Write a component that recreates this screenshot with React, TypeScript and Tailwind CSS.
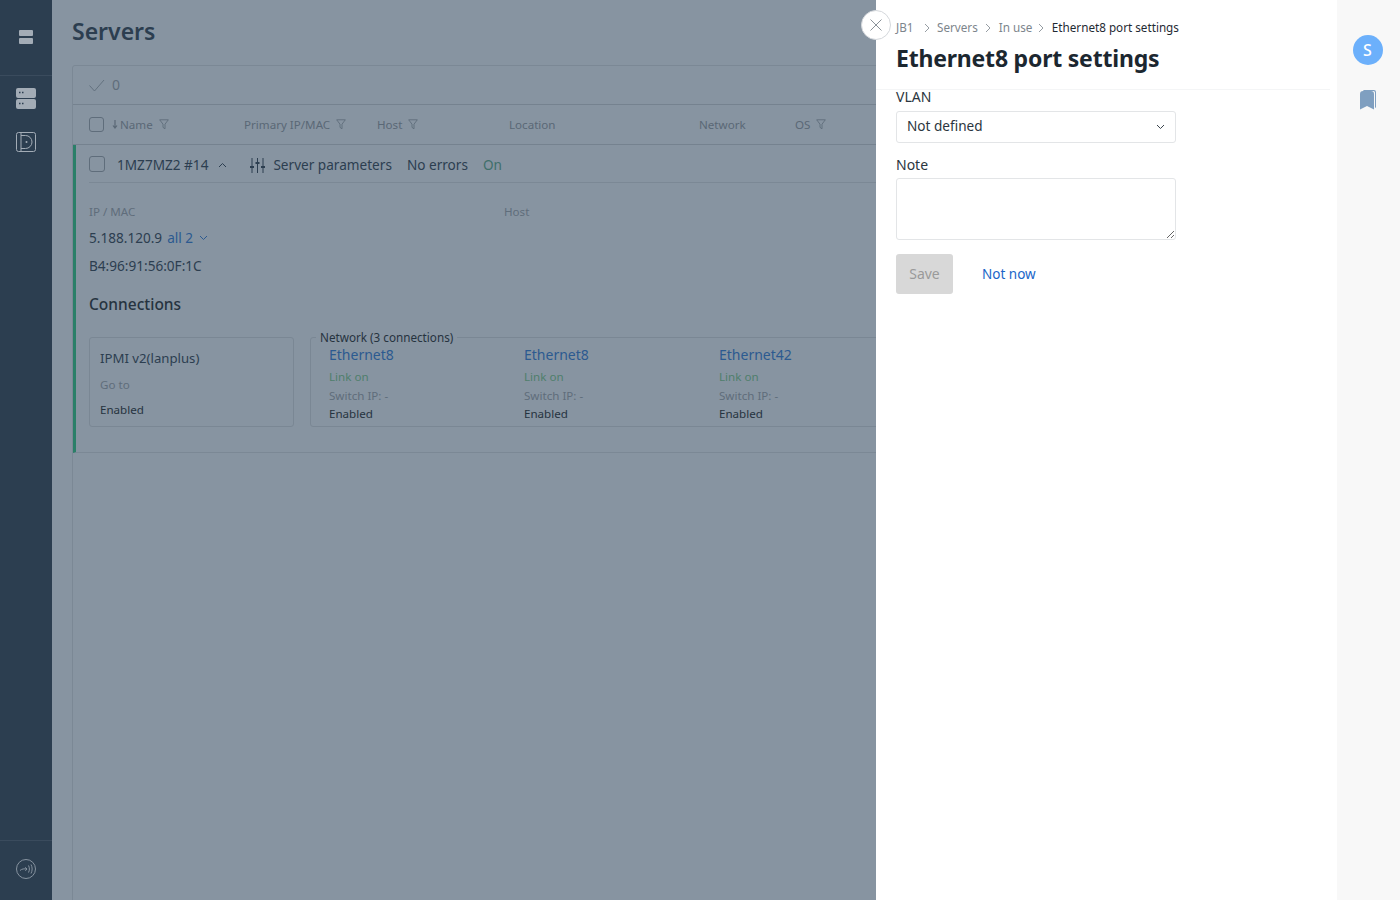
import { ReactNode } from 'react';

function Filter() {
  return (
    <svg width="10" height="11" viewBox="0 0 10 11" fill="none" stroke="#5f6d7b" strokeWidth="0.9">
      <path d="M0.7 0.8h8.6L6 5.2v4.6L4 8.4V5.2z" />
    </svg>
  );
}

function HeadCell({ label, width, filter }: { label: string; width: string; filter?: boolean }) {
  return (
    <div className={`flex items-center gap-[6px] ${width}`}>
      <span>{label}</span>
      {filter && <Filter />}
    </div>
  );
}

function Checkbox({ size }: { size: string }) {
  return <div className={`${size} rounded-[3px] border border-[#5f6d7b]`} />;
}

function PortColumn({ name, width }: { name: string; width: string }) {
  return (
    <div className={width}>
      <div className="text-sm leading-[18px] text-[#2c5a90]">{name}</div>
      <div className="mt-[4px] text-[11.6px] leading-[18px] text-[#4f7f6c]">Link on</div>
      <div className="text-[11.6px] leading-[19px] text-[#5f6d7b]">Switch IP: -</div>
      <div className="text-[11.6px] leading-[18px] text-[#26333f]">Enabled</div>
    </div>
  );
}

function Field({ label, children }: { label: string; children: ReactNode }) {
  return (
    <div>
      <div className="text-sm leading-[18px] text-[#2b3640]">{label}</div>
      {children}
    </div>
  );
}

function Crumb({ label, width }: { label: string; width?: string }) {
  return (
    <>
      <span className={width}>{label}</span>
      <svg width="6" height="10" viewBox="0 0 6 10" fill="none" stroke="#8a9299" strokeWidth="0.9" className="mx-[7.5px]">
        <path d="M1 1l4 4-4 4" />
      </svg>
    </>
  );
}

export default function App() {
  return (
    <div className="relative flex h-screen overflow-hidden bg-[#8794a1] font-['Noto_Sans',sans-serif]">
      <aside className="flex w-[52px] shrink-0 flex-col bg-[#2c3e50]">
        <div className="flex h-[76px] items-center justify-center border-b border-[#3a4b5d] pb-[1px]">
          <div className="flex flex-col gap-[2px] pr-[1px]">
            <div className="h-[6px] w-[14px] rounded-[1px] bg-[#a3acb6]" />
            <div className="h-[6px] w-[14px] rounded-[1px] bg-[#a3acb6]" />
          </div>
        </div>
        <div className="mt-[12px] flex flex-col items-center gap-[23px]">
          <svg width="20" height="21" viewBox="0 0 20 21">
            <rect y="0" width="20" height="10" rx="2" fill="#a3acb6" />
            <rect y="11" width="20" height="10" rx="2" fill="#a3acb6" />
            <path d="M3 4.500h1.500M6 4.500h1.500M3 15.500h1.500M6 15.500h1.500" stroke="#2c3e50" strokeWidth="1.400" />
          </svg>
          <svg width="20" height="20" viewBox="0 0 20 20" fill="none" stroke="#a3acb6" strokeWidth="1">
            <rect x="0.500" y="0.500" width="19" height="19" rx="2" />
            <path d="M5 0.500v19M5 3.500h4.500a6.500 6.500 0 0 1 0 13H5" />
            <circle cx="10.500" cy="10" r="1" fill="#a3acb6" stroke="none" />
          </svg>
        </div>
        <div className="mt-auto flex h-[60px] items-center justify-center border-t border-[#3a4b5d] pb-[4px]">
          <svg width="20" height="20" viewBox="0 0 20 20" fill="none" stroke="#8793a0" strokeWidth="1">
            <circle cx="10" cy="10" r="9.500" />
            <path d="M4 11.500c2-1.800 4-1.800 7-1.500l-1.800-1.700M11 10l-1.600 1.800M12.500 6.500c1.200 2.300 1.200 4.700 0 7M15 5.500c1.500 2.800 1.500 6.200 0 9" />
          </svg>
        </div>
      </aside>

      <main className="min-w-0 flex-1 px-[20px]">
        <h1 className="mt-[14px] h-[34px] text-[23px] leading-[34px] font-semibold text-[#2c3e50]">Servers</h1>
        <div className="mt-[17px] h-[900px] w-[1300px] rounded-t-[3px] border border-[#7b8895]">
          <div className="flex h-[39px] items-center gap-[7px] border-b border-[#75828f] pl-[16px] text-sm text-[#5f6d7b]">
            <svg width="16" height="13" viewBox="0 0 16 13" fill="none" stroke="#5f6d7b" strokeWidth="0.900">
              <path d="M0.500 6.500l5 5.500L15 1" />
            </svg>
            <span>0</span>
          </div>
          <div className="flex h-[40px] items-center border-b border-[#75828f] pl-[16px] text-[11.600px] text-[#5a6876]">
            <Checkbox size="h-[15px] w-[15px]" />
            <div className="ml-[8px] flex w-[132px] items-center">
              <svg width="6" height="9" viewBox="0 0 6 9" fill="none" stroke="#5a6876" strokeWidth="1.200">
                <path d="M3 0v8M1 5.500L3 8l2-2.500" />
              </svg>
              <span className="ml-[2px]">Name</span>
              <span className="ml-[6px]">
                <Filter />
              </span>
            </div>
            <HeadCell label="Primary IP/MAC" width="w-[133px]" filter />
            <HeadCell label="Host" width="w-[132px]" filter />
            <HeadCell label="Location" width="w-[190px]" />
            <HeadCell label="Network" width="w-[96px]" />
            <HeadCell label="OS" width="w-[80px]" filter />
          </div>
          <div className="h-[308px] border-b border-l-[3px] border-b-[#7b8895] border-l-[#2a7f68] pl-[13px]">
            <div className="flex h-[38px] items-center border-b border-[#7b8895] pt-[3px] text-[13.600px] text-[#2c3e50]">
              <div className="-mt-[3px]">
                <Checkbox size="h-[16px] w-[16px]" />
              </div>
              <span className="ml-[12px]">1MZ7MZ2 #14</span>
              <svg width="9" height="6" viewBox="0 0 9 6" fill="none" stroke="#2c3e50" strokeWidth="1" className="ml-[10px]">
                <path d="M1 5l3.500-3.500L8 5" />
              </svg>
              <svg width="15" height="15" viewBox="0 0 15 15" fill="none" stroke="#2c3e50" strokeWidth="1" className="ml-[23px]">
                <path d="M2 0v15M7.500 0v15M13 0v15" />
                <path d="M0 9h4M5.500 5h4M11 9h4" strokeWidth="2" />
              </svg>
              <span className="ml-[8px]">Server parameters</span>
              <span className="ml-[15px]">No errors</span>
              <span className="ml-[15px] text-[#3f6f6a]">On</span>
            </div>
            <div className="mt-[21px] flex text-[11.600px] leading-[16px] text-[#5f6d7b]">
              <span className="w-[415px]">IP / MAC</span>
              <span>Host</span>
            </div>
            <div className="mt-[9px] flex items-center text-[13.600px] leading-[18px] text-[#2c3e50]">
              <span>5.188.120.9</span>
              <span className="ml-[5px] text-[#2c5a90]">all 2</span>
              <svg width="9" height="6" viewBox="0 0 9 6" fill="none" stroke="#2c5a90" strokeWidth="1" className="ml-[6px]">
                <path d="M1 1l3.500 3.500L8 1" />
              </svg>
            </div>
            <div className="mt-[10px] text-[13.600px] leading-[18px] text-[#2c3e50]">B4:96:91:56:0F:1C</div>
            <div className="mt-[18px] text-[15.500px] leading-[22px] font-medium text-[#26333f]">Connections</div>
            <div className="mt-[22px] flex gap-[16px]">
              <div className="h-[90px] w-[205px] rounded-[3px] border border-[#7a8794] pl-[10px]">
                <div className="mt-[11px] text-[13.200px] leading-[18px] text-[#2c3e50]">IPMI v2(lanplus)</div>
                <div className="mt-[9px] text-[11.600px] leading-[18px] text-[#5f6d7b]">Go to</div>
                <div className="mt-[7px] text-[11.600px] leading-[18px] text-[#26333f]">Enabled</div>
              </div>
              <div className="relative flex h-[90px] w-[800px] rounded-[3px] border border-[#7a8794] pt-[8px] pl-[18px]">
                <span className="absolute -top-[9px] left-[5px] bg-[#8794a1] px-[4px] text-[11.700px] leading-[16px] text-[#26333f]">
                  Network (3 connections)
                </span>
                <PortColumn name="Ethernet8" width="w-[195px]" />
                <PortColumn name="Ethernet8" width="w-[195px]" />
                <PortColumn name="Ethernet42" width="w-[195px]" />
              </div>
            </div>
          </div>
        </div>
      </main>

      <div className="absolute inset-y-0 right-0 flex">
        <section className="relative w-[461px] bg-white">
          <button className="absolute top-[10px] -left-[15px] flex h-[30px] w-[30px] items-center justify-center rounded-full border border-[#d5d8dc] bg-white">
            <svg width="12" height="12" viewBox="0 0 12 12" fill="none" stroke="#8a9299" strokeWidth="1">
              <path d="M0.500 0.500l11 11M11.500 0.500l-11 11" />
            </svg>
          </button>
          <div className="mr-[7px] h-[90px] border-b border-[#f4f5f6] pl-[20px]">
            <div className="flex h-[16px] translate-y-[20px] items-center text-[11.700px] whitespace-nowrap text-[#7d858c]">
              <Crumb label="JB1" width="w-[20px]" />
              <Crumb label="Servers" />
              <Crumb label="In use" width="w-[32px]" />
              <span className="text-[#1f2a33]">Ethernet8 port settings</span>
            </div>
            <h2 className="mt-[24px] text-[23px] leading-[36px] font-bold tracking-[-0.2px] text-[#1c2730]">Ethernet8 port settings</h2>
          </div>
          <div className="-mt-[2px] pl-[20px]">
            <div className="w-[280px]">
              <Field label="VLAN">
                <div className="mt-[5px] flex h-[32px] items-center justify-between rounded-[3px] border border-[#e3e5e7] pr-[10px] pb-[2px] pl-[10px] text-[13.600px] text-[#2b3640]">
                  <span>Not defined</span>
                  <svg width="9" height="6" viewBox="0 0 9 6" fill="none" stroke="#3a444d" strokeWidth="1" className="mt-[2px]">
                    <path d="M1 1l3.500 3.500L8 1" />
                  </svg>
                </div>
              </Field>
              <div className="mt-[13px]">
                <Field label="Note">
                  <textarea className="mt-[4px] block h-[62px] w-[280px] rounded-[3px] border border-[#e3e5e7] outline-none" />
                </Field>
              </div>
            </div>
            <div className="mt-[14px] flex items-center">
              <button className="h-[40px] w-[57px] rounded-[3px] bg-[#d8d8d8] text-sm text-[#9a9a9a]">Save</button>
              <span className="ml-[29px] text-[13.500px] text-[#1a66c9]">Not now</span>
            </div>
          </div>
        </section>
        <div className="flex w-[63px] flex-col items-center bg-[#f8f8f8] pt-[35px] pr-[2px]">
          <div className="flex h-[30px] w-[30px] items-center justify-center rounded-full bg-[#6cb0fb] text-base font-medium text-white">S</div>
          <svg width="18" height="20" viewBox="0 0 18 20" fill="#7f9fc0" className="mt-[25px]">
            <path d="M4 1a1.500 1.500 0 0 1 1.500-1H15a2 2 0 0 1 2 2v16l-1-.8V2.500A1.500 1.500 0 0 0 14.500 1z" />
            <path d="M1 4a3 3 0 0 1 3-3h8a3 3 0 0 1 3 3v15.500l-7-3.500-7 3.500z" />
          </svg>
        </div>
      </div>
    </div>
  );
}
